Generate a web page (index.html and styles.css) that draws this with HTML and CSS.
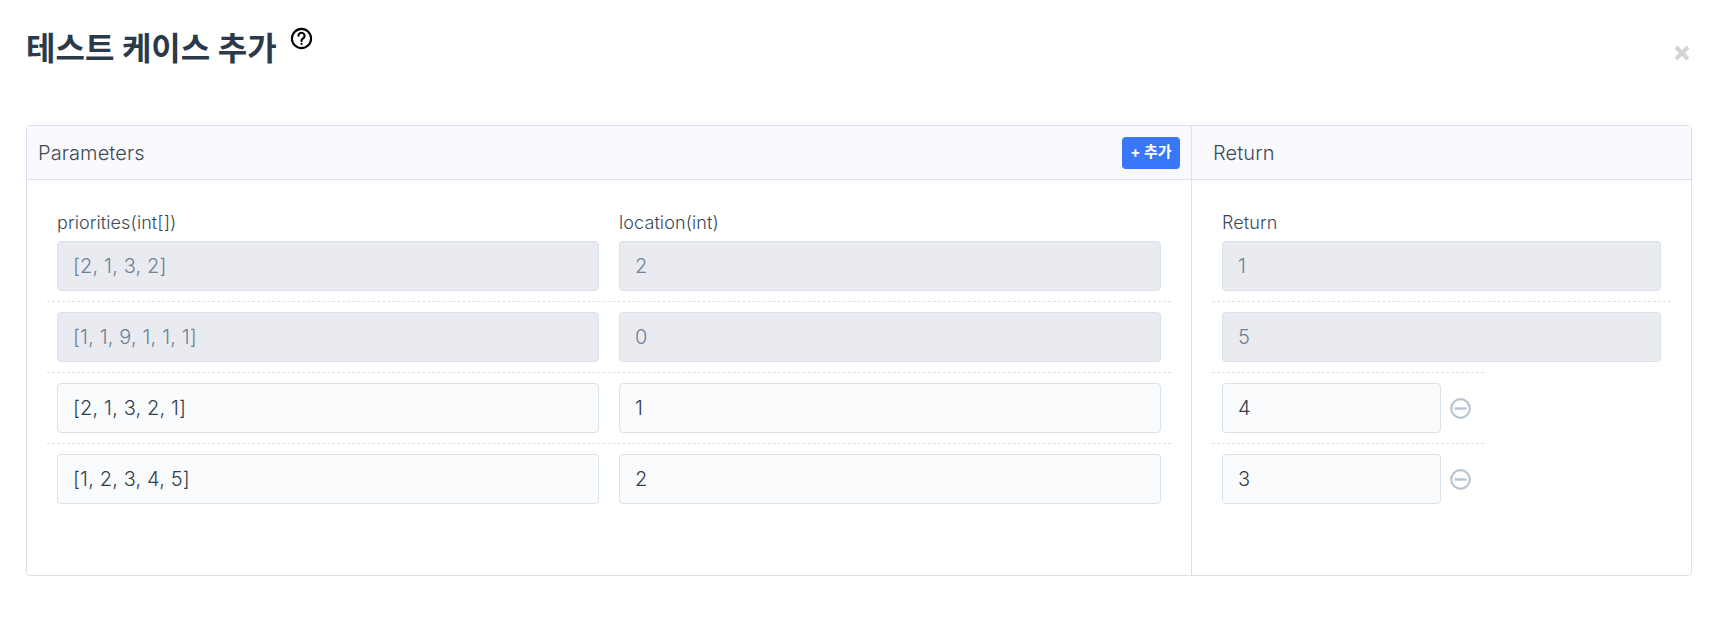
FILE: index.html
```html
<!DOCTYPE html>
<html lang="ko">
<head>
<meta charset="utf-8">
<title>테스트 케이스 추가</title>
<link rel="stylesheet" href="styles.css">
</head>
<body>
<div class="modal">
  <header class="modal-head">
    <h1 class="title">테스트 케이스 추가</h1>
    <svg class="help" viewBox="0 0 24 24" width="23" height="23" fill="none" stroke="#000" stroke-width="2.2" stroke-linecap="round" aria-hidden="true">
      <circle cx="12" cy="12" r="10"/>
      <path d="M8.8 9.2a3.2 3.2 0 1 1 4.9 2.7c-1 .7-1.7 1.3-1.7 2.6"/>
      <path d="M12 17.6v.2"/>
    </svg>
    <svg class="close" viewBox="0 0 16 16" width="16" height="16" aria-hidden="true">
      <path d="M2 2l12 12M14 2L2 14" stroke="#d3d3d3" stroke-width="4" fill="none"/>
    </svg>
  </header>
  <section class="card">
    <div class="col col-params">
      <div class="col-head">
        <span>Parameters</span>
        <button class="add-btn" type="button">+ 추가</button>
      </div>
      <div class="col-body">
        <div class="labels">
          <label class="field-label">priorities(int[])</label>
          <label class="field-label">location(int)</label>
        </div>
        <div class="row">
          <div class="input disabled">[2, 1, 3, 2]</div>
          <div class="input disabled">2</div>
        </div>
        <div class="row">
          <div class="input disabled">[1, 1, 9, 1, 1, 1]</div>
          <div class="input disabled">0</div>
        </div>
        <div class="row">
          <div class="input">[2, 1, 3, 2, 1]</div>
          <div class="input">1</div>
        </div>
        <div class="row">
          <div class="input">[1, 2, 3, 4, 5]</div>
          <div class="input">2</div>
        </div>
      </div>
    </div>
    <div class="col col-return">
      <div class="col-head col-head-return"><span>Return</span></div>
      <div class="col-body">
        <div class="labels"><label class="field-label">Return</label></div>
        <div class="row"><div class="input disabled">1</div></div>
        <div class="row"><div class="input disabled">5</div></div>
        <div class="row row-short">
          <div class="input input-short">4</div>
          <svg class="minus" viewBox="0 0 21 21" width="21" height="21" aria-hidden="true"><circle cx="10.5" cy="10.5" r="9.3" fill="none" stroke="#b8c4d2" stroke-width="2.2"/><path d="M4.5 10.5h12" stroke="#b8c4d2" stroke-width="2.4"/></svg>
        </div>
        <div class="row row-short">
          <div class="input input-short">3</div>
          <svg class="minus" viewBox="0 0 21 21" width="21" height="21" aria-hidden="true"><circle cx="10.5" cy="10.5" r="9.3" fill="none" stroke="#b8c4d2" stroke-width="2.2"/><path d="M4.5 10.5h12" stroke="#b8c4d2" stroke-width="2.4"/></svg>
        </div>
      </div>
    </div>
  </section>
</div>
</body>
</html>
```
FILE: styles.css
```css
* { box-sizing: border-box; }
html, body { margin: 0; padding: 0; background: #fff; }
body {
  font-family: Inter, "Noto Sans CJK KR", sans-serif;
  font-weight: 300;
  color: #263747;
}
.modal { padding: 0 24px 0 26px; height: 619px; overflow: hidden; }
.modal-head {
  position: relative;
  height: 125px;
  display: flex;
  align-items: flex-start;
  padding-top: 26px;
}
.title {
  margin: 0;
  font-size: 32px;
  line-height: 46px;
  font-weight: 700;
  color: #2b3a4a;
}
.help { margin: 1px 0 0 13px; }
.close { position: absolute; right: 2px; top: 45px; }
.card {
  display: flex;
  height: 451px;
  border: 1px solid #d7e2eb;
  border-radius: 4px;
}
.col-params { width: 1165px; border-right: 1px solid #d7e2eb; }
.col-return { flex: 1; }
.col-head {
  height: 54px;
  background: #fafafe;
  border-bottom: 1px solid #d7e2eb;
  display: flex;
  align-items: center;
  justify-content: space-between;
  padding: 0 11px;
  font-size: 20px;
  letter-spacing: 0.1px;
  color: #3a4a5b;
}
.col-head-return { padding-left: 21px; }
.add-btn {
  width: 58px;
  height: 32px;
  padding: 0 0 5px;
  border: 0;
  border-radius: 4px;
  background: #3876fa;
  color: #fff;
  letter-spacing: 0;
  font: 700 15px Inter, "Noto Sans CJK KR", sans-serif;
}
.col-body { padding: 31px 20px 0; }
.labels { display: flex; gap: 20px; height: 30px; padding: 0 10px; }
.field-label {
  flex: 1;
  font-size: 18px;
  letter-spacing: 0.1px;
  line-height: 24px;
  color: #3a4a5b;
}
.row {
  display: flex;
  gap: 20px;
  padding: 10px;
  height: 71px;
  border-top: 1px dashed #d7e2eb;
}
.labels + .row { height: 60px; padding-top: 0; border-top: 0; }
.input {
  flex: 1;
  height: 50px;
  border: 1px solid #d7e2eb;
  border-radius: 4px;
  background: #fafbfd;
  padding: 0 15px;
  font-size: 20px;
  letter-spacing: 0.15px;
  line-height: 48px;
  color: #303f4e;
}
.input.disabled { background: #e9ebf1; color: #6d8193; }
.row-short { width: 272px; gap: 9px; align-items: center; }
.input-short { flex: 0 0 219px; }
.minus { flex: none; }
```
